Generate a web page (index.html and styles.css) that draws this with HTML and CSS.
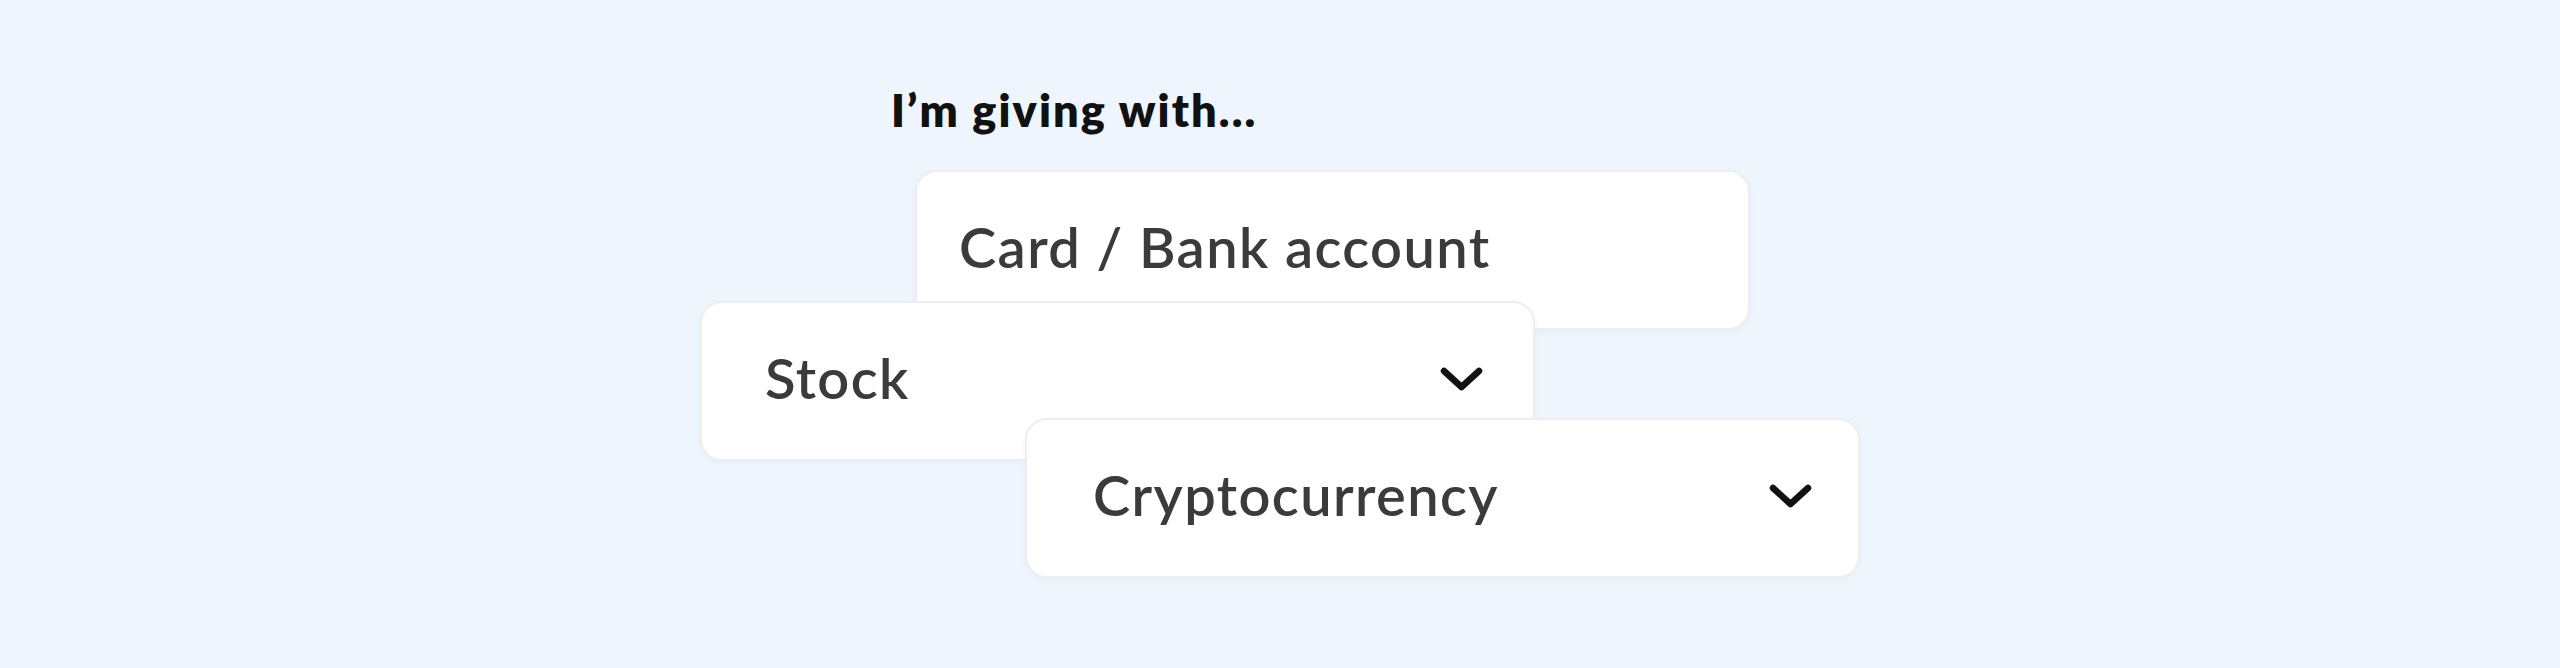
FILE: index.html
```html
<!DOCTYPE html>
<html lang="en">
<head>
<meta charset="utf-8">
<title>Giving with</title>
<link rel="stylesheet" href="styles.css">
</head>
<body>
<main class="stage">
  <h1 class="title">I’m giving with...</h1>
  <div class="option option-card">
    <span class="label">Card / Bank account</span>
  </div>
  <div class="option option-stock">
    <span class="label">Stock</span>
    <svg class="chev" width="43" height="24" viewBox="0 0 43 24" aria-hidden="true"><polyline points="4,4 21.5,20 39,4" fill="none" stroke="#111" stroke-width="6.5" stroke-linecap="round" stroke-linejoin="round"/></svg>
  </div>
  <div class="option option-crypto">
    <span class="label">Cryptocurrency</span>
    <svg class="chev" width="43" height="24" viewBox="0 0 43 24" aria-hidden="true"><polyline points="4,4 21.5,20 39,4" fill="none" stroke="#111" stroke-width="6.5" stroke-linecap="round" stroke-linejoin="round"/></svg>
  </div>
</main>
</body>
</html>
```
FILE: styles.css
```css
html, body {
  margin: 0;
  padding: 0;
}
body {
  background: #eff5fd;
  width: 2560px;
  height: 668px;
  overflow: hidden;
  font-family: "Lato", "Noto Sans", sans-serif;
}
.stage {
  display: flex;
  flex-direction: column;
  align-items: flex-start;
  padding-top: 88px;
}
.title {
  margin: 0 0 0 891px;
  font-size: 45px;
  line-height: 44px;
  font-weight: 800;
  color: #111;
  letter-spacing: 2.1px;
}
.option {
  position: relative;
  box-sizing: border-box;
  width: 835px;
  height: 160px;
  padding-bottom: 6px;
  background: #fff;
  border: 2px solid #eceef1;
  border-radius: 22px;
  box-shadow: 0 2px 6px rgba(30, 40, 60, 0.04);
  display: flex;
  align-items: center;
  justify-content: space-between;
  color: #3b3b3d;
  font-size: 56px;
  font-weight: 600;
  letter-spacing: 1.4px;
}
.label {
  line-height: 1;
}
.option-card {
  z-index: 1;
  margin-top: 38px;
  margin-left: 915px;
  padding-left: 42px;
}
.option-stock {
  z-index: 2;
  margin-top: -29px;
  margin-left: 700px;
  padding-left: 63px;
  padding-right: 50px;
}
.option-crypto {
  z-index: 3;
  margin-top: -43px;
  margin-left: 1025px;
  padding-left: 66px;
  padding-right: 46px;
}
.chev {
  display: block;
  flex: none;
  margin-top: 2px;
}
```
